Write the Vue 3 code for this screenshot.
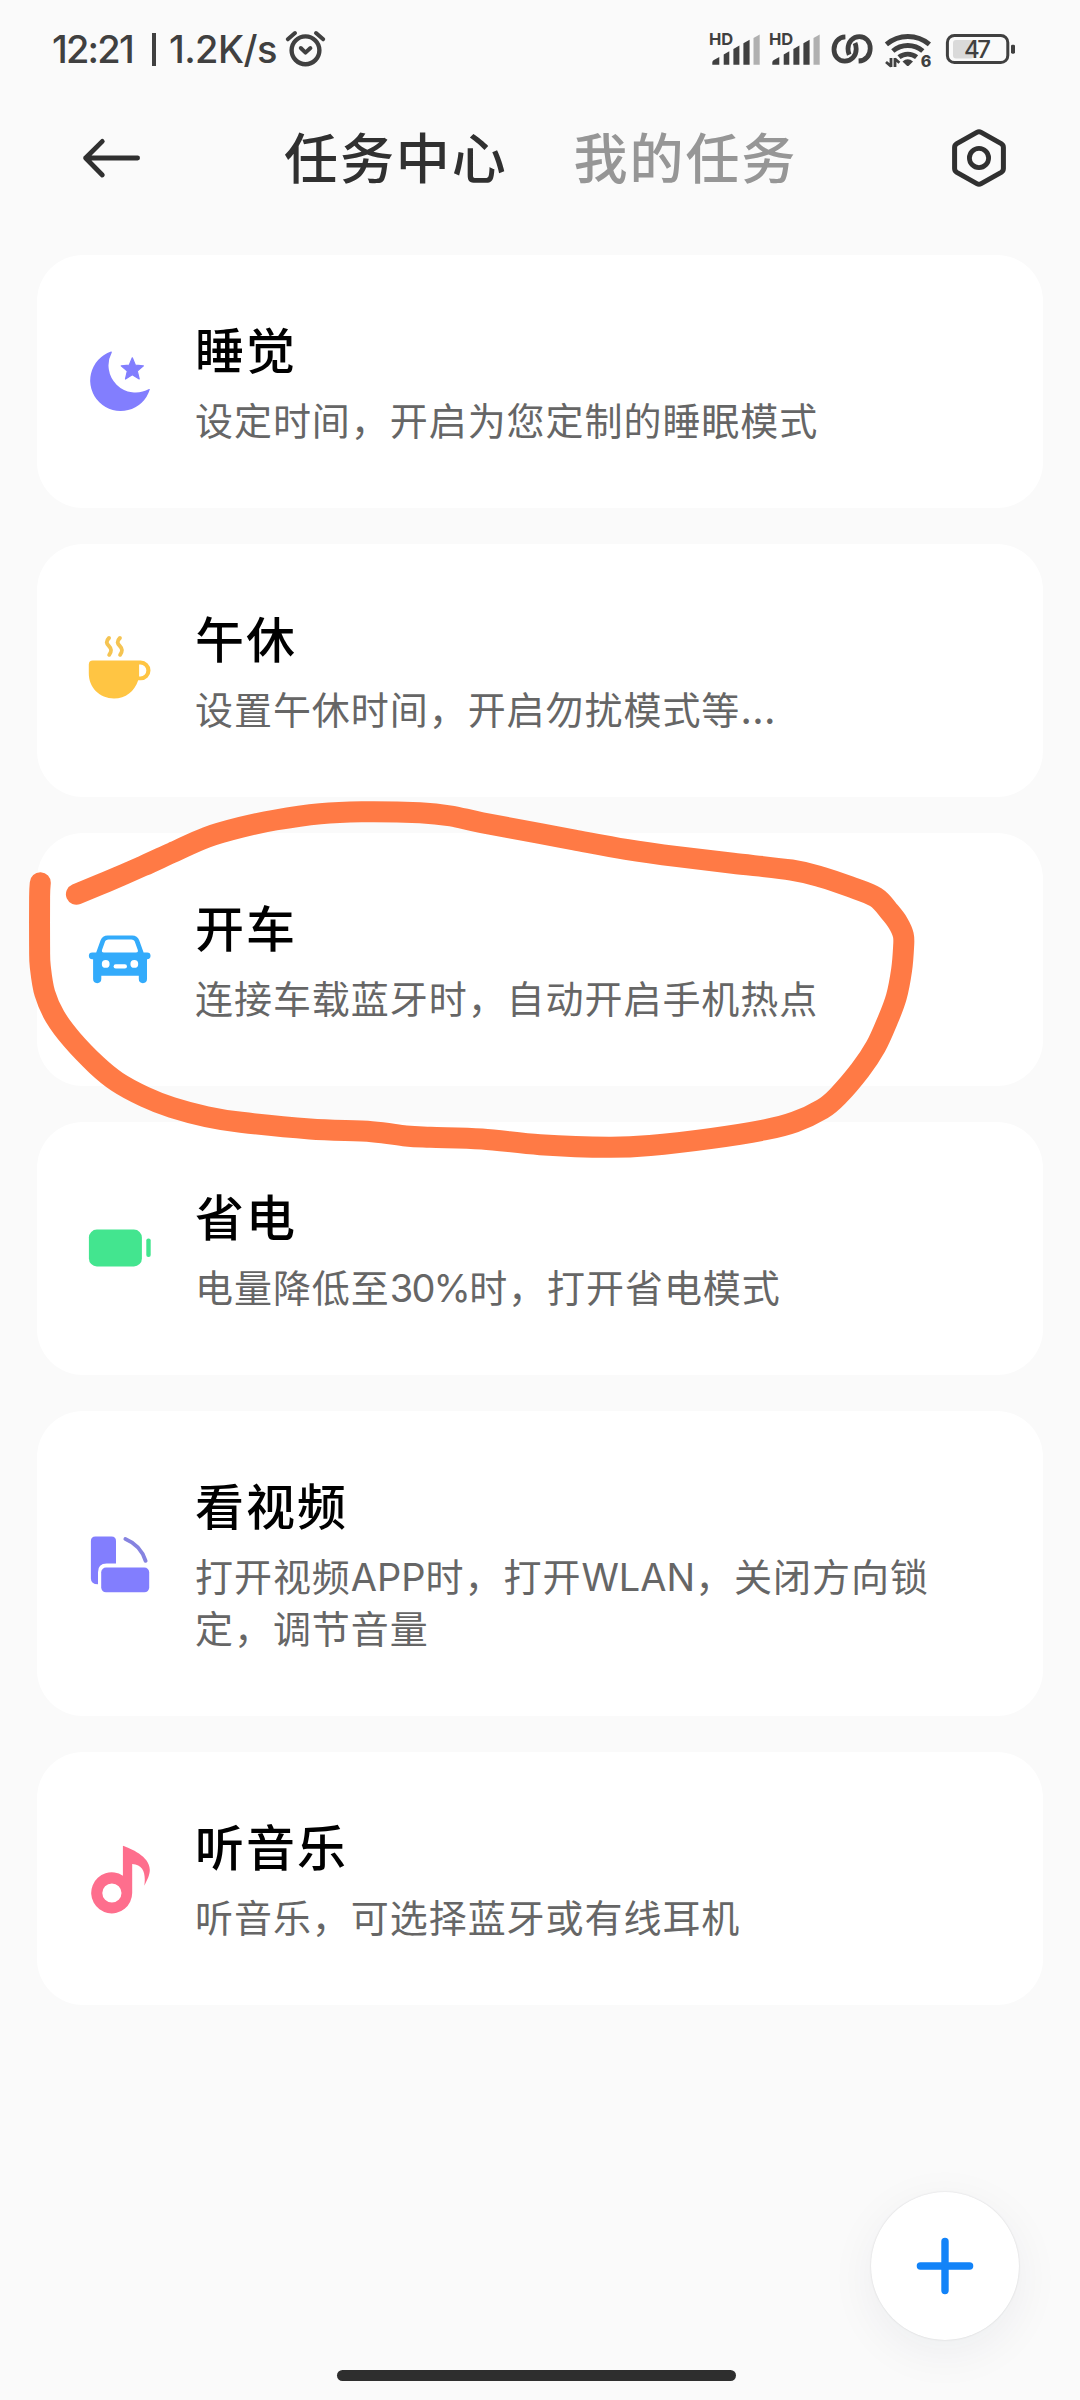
<script setup>
const tasks = [
  { icon: 'moon', title: '睡觉', desc: ['设定时间，开启为您定制的睡眠模式'] },
  { icon: 'cup', title: '午休', desc: ['设置午休时间，开启勿扰模式等', '…'] },
  { icon: 'car', title: '开车', desc: ['连接车载蓝牙时，自动开启手机热点'] },
  { icon: 'battery', title: '省电', desc: ['电量降低至', '30%', '时，打开省电模式'] },
  { icon: 'rotate', title: '看视频', desc: ['打开视频', 'APP', '时，打开', 'WLAN', '，关闭方向锁定，调节音量'] },
  { icon: 'music', title: '听音乐', desc: ['听音乐，可选择蓝牙或有线耳机'] },
]

function runClass(run) {
  if (run === '…') return 'dots'
  if (/^\d/.test(run)) return 'digits'
  if (/^[A-Z]/.test(run)) return 'latin'
  return ''
}

// Points of the hand-drawn highlight, joined by a Catmull-Rom curve.
const marks = [
  [76.4, 894.3], [106.7, 881.7], [142.9, 866], [172, 852.7], [206.6, 837.3], [241, 827.3],
  [275.5, 820], [320.2, 813.7], [361.6, 811.7], [420, 812.7], [451, 816], [482, 822.7],
  [540, 833.5], [574.4, 840], [626, 849.3], [677.7, 856.7], [732.8, 863.3], [791.4, 870],
  [822.4, 877.3], [850, 886.7], [875.7, 897.2], [889.5, 911.7], [898, 923], [903.3, 935],
  [903.6, 946.7], [901.6, 970], [896.4, 996.7], [887.8, 1020], [875.7, 1046.7], [860.2, 1070],
  [838, 1096], [822.4, 1109], [794.8, 1122], [763.8, 1130], [712, 1138.3], [650, 1145.5],
  [608.9, 1147.3], [540, 1144.7], [482, 1139], [430.4, 1137.3], [406, 1136], [371.9, 1131.7],
  [310, 1129], [241, 1122.3], [206.6, 1116.7], [172, 1107.5], [144.6, 1096.7], [117, 1081.7],
  [96.4, 1065], [72.3, 1040], [55, 1016.7], [44.8, 993.3], [40.3, 966.7], [39.6, 946.7],
  [39.6, 896.7], [40.3, 882.7],
]

const markPath = marks.slice(1).reduce((d, p, i) => {
  const p0 = marks[Math.max(i - 1, 0)]
  const p1 = marks[i]
  const p3 = marks[Math.min(i + 2, marks.length - 1)]
  const a = [p1[0] + (p[0] - p0[0]) / 6, p1[1] + (p[1] - p0[1]) / 6]
  const b = [p[0] - (p3[0] - p1[0]) / 6, p[1] - (p3[1] - p1[1]) / 6]
  return `${d}C${[...a, ...b, ...p].map((n) => n.toFixed(1)).join(' ')}`
}, `M${marks[0].join(' ')}`)
</script>

<template>
  <div class="screen">
    <div class="status">
      <div class="status-left">
        <span class="clock">12:21</span>
        <span class="divider"></span>
        <span class="speed">1.2K/s</span>
        <svg class="alarm" width="44" height="42" viewBox="284 29 44 42" fill="none" stroke="#404040" stroke-linecap="round" stroke-linejoin="round">
          <circle cx="305.5" cy="50.3" r="13.9" stroke-width="4.4" />
          <path d="M287.8 39.3 295 33M323.2 39.3 316 33" stroke-width="4" />
          <path d="m300.8 48 4.7 4.6 4.9-4.6" stroke-width="4" />
        </svg>
      </div>
      <div class="status-right">
        <svg v-for="n in 2" :key="n" class="signal" width="50" height="36" viewBox="710 30 50 36" fill="#404040">
          <text x="709" y="45" class="hd">HD</text>
          <path d="M712.3 64.7v-2.2q0-1.6 1.6-2.4l5.4-3.2v7.8z" />
          <path d="M723.7 64.7V54.4l5.6-3.2v13.5zM733.4 64.7V49l6-3.6v19.3zM743.4 64.7V43.2l6.2-3.4v24.9z" />
          <path d="M753.5 64.7V38l6.2-3.6v30.3z" fill="#b0b0b0" />
        </svg>
        <svg class="link" width="42" height="32" viewBox="831 33 42 32" fill="none" stroke="#404040" stroke-width="4.8">
          <path d="M845.4 36.8C838.2 37 834 42.8 834 49.4C834 56 838.4 61.2 844.8 61.2C851.4 61.2 856.2 56 856.2 49C856.2 46.6 855.8 44.8 855 43" />
          <path d="M858.6 61C866 60.8 870.2 55 870.2 48.4C870.2 41.8 866 36.6 859.4 36.6C852.8 36.6 848 41.8 848 48.8C848 51.2 848.4 53 849.2 54.8" />
        </svg>
        <svg class="wifi" width="48" height="38" viewBox="884 31 48 38" fill="none" stroke="#404040" stroke-width="4.9">
          <path d="M886.4 44.4A33 33 0 0 1 929.4 44.4M892.8 51A23 23 0 0 1 922.8 51M899 57.2A14 14 0 0 1 916.6 57.2" />
          <path d="M902.5 61.4Q907.8 57.2 913 61.4L909 65.4Q907.8 66.4 906.6 65.4Z" fill="#404040" stroke="none" />
          <path d="M891 58V67M891.2 66.4 886 62M895 67V58M894.8 58.8 899.4 62.8" stroke-width="2.8" />
          <text x="920.8" y="67" class="six">6</text>
        </svg>
        <svg class="power" width="72" height="34" viewBox="945 32 72 34">
          <rect x="947.4" y="35.4" width="60.4" height="27.2" rx="7" fill="none" stroke="#404040" stroke-width="3" />
          <rect x="953" y="40" width="20.5" height="18.4" rx="3" fill="#dadada" />
          <rect x="1011" y="44.7" width="4" height="9" rx="1.4" fill="#404040" />
          <text x="964" y="58.2" class="pct">47</text>
        </svg>
      </div>
    </div>

    <header class="top">
      <svg width="64" height="64" viewBox="80 126 64 64" fill="none" stroke="#303030" stroke-width="4.8" stroke-linecap="round" stroke-linejoin="round">
        <path d="M137.6 158H85.6M102.3 141.4 85.6 158 102.3 175" />
      </svg>
      <nav class="tabs">
        <span class="tab active">任务中心</span>
        <span class="tab">我的任务</span>
      </nav>
      <svg class="gear" width="64" height="64" viewBox="947 126 64 64" fill="none" stroke="#303030" stroke-linejoin="round">
        <path d="M976.8 132.4Q979 131.2 981.2 132.4L1001.2 143.6Q1003.4 144.9 1003.4 147.4V168.6Q1003.4 171.1 1001.2 172.4L981.2 183.6Q979 184.8 976.8 183.6L956.8 172.4Q954.6 171.1 954.6 168.6V147.4Q954.6 144.9 956.8 143.6Z" stroke-width="5" />
        <circle cx="979" cy="158" r="9.6" stroke-width="4.8" />
      </svg>
    </header>

    <main class="list">
      <section v-for="t in tasks" :key="t.icon" class="card">
        <svg class="icon" width="72" height="72" viewBox="0 0 72 72">
          <template v-if="t.icon === 'moon'">
            <path d="M27 5.6A30.5 30.5 0 1 0 65.8 43.6Q66 42.6 65 43.1A27.2 27.2 0 0 1 27.8 6.4Q28 5.3 27 5.6Z" fill="#827efe" />
            <path d="M48.3 11.8 51.4 19.2 59.4 19.9 53.3 25.1 55.2 33 48.3 28.8 41.5 33 43.3 25.1 37.2 19.9 45.2 19.2Z" fill="#827efe" stroke="#827efe" stroke-width="1.2" stroke-linejoin="round" />
          </template>
          <template v-else-if="t.icon === 'cup'">
            <path fill-rule="evenodd" d="M8.8 25.5H56.6A9.9 9.9 0 0 1 56.6 45.3H54.2C50.6 56.6 41.6 63.5 30 63.5C15.6 63.5 4.8 52.6 4.8 38.6V29.5Q4.8 25.5 8.8 25.5ZM55.1 29.5V41.4H56.4A5.95 5.95 0 0 0 56.4 29.5Z" fill="#ffc543" />
            <path d="M25 3C21.6 6.4 22.4 8.6 25 11.2C27.8 14 27.8 16.2 25.2 19.8M35.9 3C32.5 6.4 33.3 8.6 35.9 11.2C38.7 14 38.7 16.2 36.1 19.8" fill="none" stroke="#f5c452" stroke-width="3.9" stroke-linecap="round" />
          </template>
          <template v-else-if="t.icon === 'car'">
            <path fill-rule="evenodd" d="M23.6 11.5H48.2Q53.4 11.5 55.2 16.2L59.6 28.5H63.2A3.35 3.35 0 0 1 63.2 35.2H63V55.1A4.1 4.1 0 0 1 54.8 55.1V51.8H17.3V55.1A4.1 4.1 0 0 1 9.1 55.1V35.2H8.2A3.35 3.35 0 0 1 8.2 28.5H12.2L16.6 16.2Q18.4 11.5 23.6 11.5ZM24.6 15.6Q21.6 15.6 20.7 18.4L18 26Q17.4 28.5 19.8 28.5H52Q54.4 28.5 53.8 26L51.1 18.4Q50.2 15.6 47.2 15.6Z" fill="#33abfb" />
            <circle cx="21.7" cy="39.9" r="3.9" fill="#fff" />
            <circle cx="50.3" cy="39.9" r="3.9" fill="#fff" />
            <rect x="29.6" y="40.3" width="13.4" height="4.2" rx="2.1" fill="#fff" />
          </template>
          <template v-else-if="t.icon === 'battery'">
            <rect x="4.9" y="16.6" width="53" height="36.8" rx="8" fill="#43e58f" />
            <rect x="62.3" y="25.5" width="4.4" height="18.6" rx="2" fill="#43e58f" />
          </template>
          <template v-else-if="t.icon === 'rotate'">
            <path d="M11.4 8.5H27.5Q32 8.5 32 13V35.6H22.6Q14 35.6 14 44.2V56.2Q6.9 56.2 6.9 50.4V13Q6.9 8.5 11.4 8.5Z" fill="#827efe" />
            <rect x="17.2" y="39.5" width="48" height="24.8" rx="4.8" fill="#827efe" />
            <path d="M41.4 11Q56.6 17.2 61.6 32.8" fill="none" stroke="#8683e0" stroke-width="3.9" stroke-linecap="round" />
          </template>
          <template v-else>
            <path fill-rule="evenodd" d="M38.9 2.8C46 5.3 65.8 13.2 65.8 26.8C65.8 32 63.4 36.6 60.3 42.8C61.8 31.4 60.2 22 48.2 21V50A20.5 20.5 0 1 1 38.9 32.7ZM27.9 40.4A9.6 9.6 0 1 0 27.9 59.6A9.6 9.6 0 1 0 27.9 40.4Z" fill="#fe6e8d" />
          </template>
        </svg>
        <div class="body">
          <h2 class="title">{{ t.title }}</h2>
          <p class="desc"><span v-for="run in t.desc" :key="run" :class="runClass(run)">{{ run }}</span></p>
        </div>
      </section>
    </main>

    <svg class="scribble" width="1080" height="2400" viewBox="0 0 1080 2400" fill="none">
      <path :d="markPath" stroke="#ff7a45" stroke-width="21" stroke-linecap="round" stroke-linejoin="round" />
    </svg>

    <button class="fab">
      <svg width="60" height="60" viewBox="0 0 60 60" stroke="#1283f8" stroke-width="7.4" stroke-linecap="round">
        <path d="M30 5.4V54.6M5.4 30H54.6" />
      </svg>
    </button>
    <div class="home-bar"></div>
  </div>
</template>

<style>
body {
  background: #fafafa;
}
</style>

<style scoped>
.screen {
  position: relative;
  width: 1080px;
  height: 2400px;
  overflow: hidden;
  background: #fafafa;
  font-family: Inter, "Noto Sans CJK SC", sans-serif;
}
.status {
  display: flex;
  justify-content: space-between;
  height: 100px;
  padding: 0 63px 0 52px;
  box-sizing: border-box;
  color: #404040;
}
.status-left,
.status-right {
  display: flex;
  align-items: center;
  height: 98px;
}
.clock,
.speed {
  font-size: 38px;
  font-weight: 500;
  line-height: 98px;
  white-space: nowrap;
}
.clock {
  width: 100px;
  letter-spacing: -1.8px;
}
.divider {
  width: 4px;
  height: 33px;
  margin-right: 13px;
  background: #404040;
}
.speed {
  width: 115px;
  letter-spacing: -0.6px;
}
.alarm {
  margin-top: 1px;
}
.signal {
  margin: -2px 10px 0 0;
  overflow: visible;
}
.hd {
  font-size: 16.5px;
  font-weight: 700;
}
.link {
  margin-left: 1px;
}
.wifi {
  margin: 2px 13px 0 11px;
  overflow: visible;
}
.six {
  font-size: 16px;
  font-weight: 800;
  fill: #404040;
  stroke: none;
}
.pct {
  font-size: 24px;
  font-weight: 500;
  letter-spacing: -2.4px;
  fill: #404040;
}
.top {
  display: flex;
  align-items: center;
  height: 116px;
  padding: 0 69px 0 80px;
}
.tabs {
  display: flex;
  flex: 1;
  gap: 66px;
  padding: 3px 0 0 140px;
}
.tab {
  font-size: 54px;
  font-weight: 500;
  line-height: 80px;
  letter-spacing: 1.9px;
  color: #969696;
  white-space: nowrap;
}
.tab.active {
  color: #303030;
}
.list {
  display: flex;
  flex-direction: column;
  gap: 36px;
  padding: 39px 37px 0;
}
.card {
  display: flex;
  align-items: center;
  padding: 62px 90px 61px 47px;
  border-radius: 46px;
  background: #fff;
}
.icon {
  flex: none;
}
.body {
  flex: 1;
  margin-left: 39px;
}
.title {
  margin: 0 0 10px;
  padding-top: 2px;
  font-size: 49px;
  font-weight: 500;
  line-height: 66px;
  letter-spacing: 2px;
  color: #000;
}
.desc {
  margin: 0;
  font-size: 38px;
  line-height: 52px;
  letter-spacing: 0.95px;
  color: #666;
}
.digits {
  letter-spacing: -1.8px;
}
.latin {
  letter-spacing: 0;
}
.dots {
  letter-spacing: 3px;
  font-size: 41px;
  line-height: 1;
}
.scribble {
  position: absolute;
  top: 0;
  left: 0;
  pointer-events: none;
}
.fab {
  position: absolute;
  right: 61px;
  bottom: 60px;
  display: flex;
  align-items: center;
  justify-content: center;
  width: 148px;
  height: 148px;
  padding: 0;
  border: 0;
  border-radius: 50%;
  background: #fff;
  box-shadow: 0 0 2px rgba(0, 0, 0, 0.14), 0 12px 48px rgba(20, 40, 70, 0.06);
}
.home-bar {
  position: absolute;
  bottom: 19px;
  left: 337px;
  width: 399px;
  height: 11px;
  border-radius: 6px;
  background: #2e2e2e;
}
</style>
